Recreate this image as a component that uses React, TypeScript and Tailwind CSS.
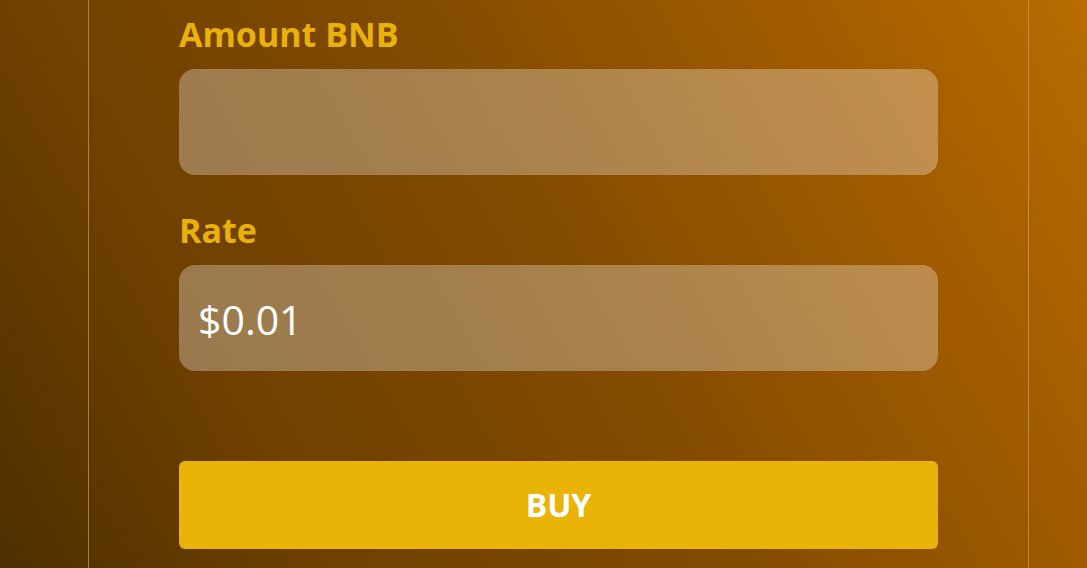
export default function App() {
  return (
    <div className="h-[568px] w-full overflow-hidden bg-[linear-gradient(60deg,#4e2f00_0%,#6e4000_23%,#804a00_50%,#9f5a00_77%,#b86c00_100%)] font-['Open_Sans','Noto_Sans',sans-serif]">
      <div className="ml-[88px] h-full w-[941px] border-x border-[#c79b6a]/70 px-[90px]">
        <div className="pt-[8px]">
          <label className="block text-[34px] leading-[52px] font-bold text-[#e9b10a]">Amount BNB</label>
          <div className="mt-[9px] h-[106px] rounded-2xl bg-white/30"></div>
        </div>
        <div className="mt-[29px]">
          <label className="block text-[34px] leading-[52px] font-bold text-[#e9b10a]">Rate</label>
          <div className="mt-[9px] flex h-[106px] items-center rounded-2xl bg-white/30 px-[19px] pt-[3px]">
            <span className="text-[41px] text-white">$0.01</span>
          </div>
        </div>
        <button className="mt-[90px] flex h-[88px] w-full items-center justify-center rounded-md bg-[#e9b308] text-[32px] font-bold text-white">
          BUY
        </button>
      </div>
    </div>
  );
}
